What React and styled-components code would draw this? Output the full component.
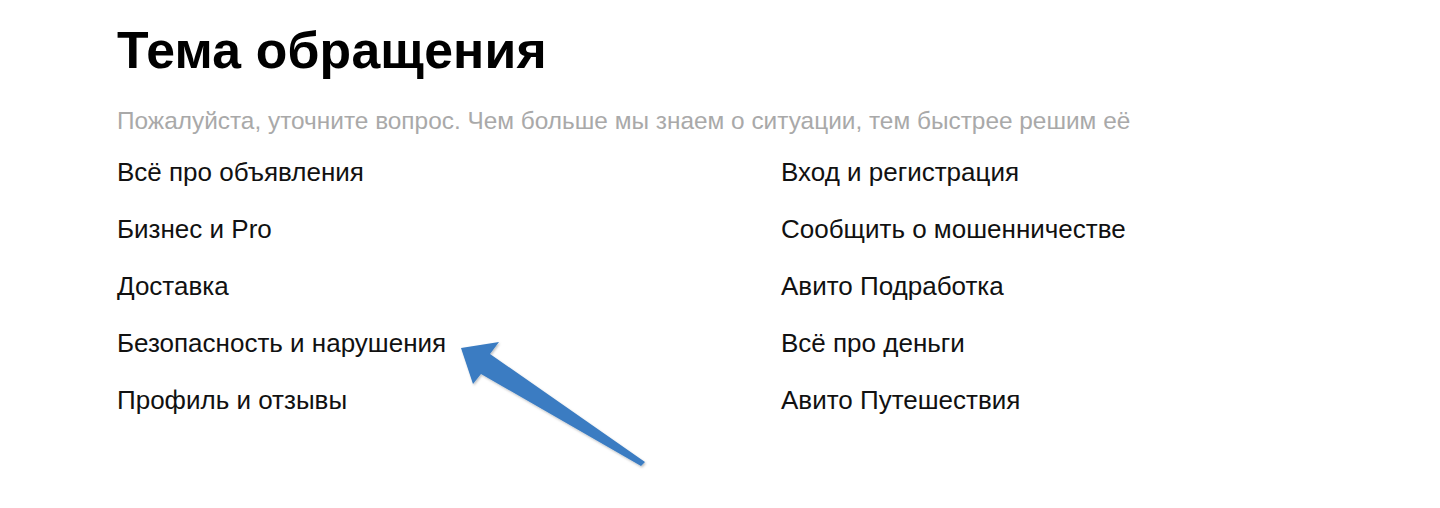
import React from "react";
import styled, { createGlobalStyle } from "styled-components";

const GlobalStyle = createGlobalStyle`
  html, body {
    margin: 0;
    padding: 0;
    background: #ffffff;
  }
  body {
    font-family: "Liberation Sans", Arial, sans-serif;
    color: #000000;
  }
`;

const topicsLeft = [
  "Всё про объявления",
  "Бизнес и Pro",
  "Доставка",
  "Безопасность и нарушения",
  "Профиль и отзывы",
];

const topicsRight = [
  "Вход и регистрация",
  "Сообщить о мошенничестве",
  "Авито Подработка",
  "Всё про деньги",
  "Авито Путешествия",
];

const Arrow = () => (
  <ArrowSvg width="200" height="140" viewBox="0 0 200 140">
    <defs>
      <filter id="arrowShadow" x="-20%" y="-20%" width="140%" height="140%">
        <feDropShadow dx="1" dy="1.5" stdDeviation="1.2" floodColor="#000" floodOpacity="0.25" />
      </filter>
    </defs>
    <path
      d="M2 7 L40 1 L31 13 L186 121 L182 125 L22 33 L14 43 Z"
      fill="#3b7cc2"
      filter="url(#arrowShadow)"
      strokeLinejoin="round"
    />
  </ArrowSvg>
);

const App = () => {
  return (
    <>
      <GlobalStyle />
      <Page>
        <Title>Тема обращения</Title>
        <Hint>
          Пожалуйста, уточните вопрос. Чем больше мы знаем о ситуации, тем
          быстрее решим её
        </Hint>
        <Columns>
          <Column>
            {topicsLeft.map((topic) => (
              <Topic key={topic}>{topic}</Topic>
            ))}
          </Column>
          <Column>
            {topicsRight.map((topic) => (
              <Topic key={topic}>{topic}</Topic>
            ))}
          </Column>
        </Columns>
        <Arrow />
      </Page>
    </>
  );
};

export default App;

const Page = styled.div`
  position: relative;
  width: 1440px;
  height: 508px;
  box-sizing: border-box;
  padding: 20px 0 0 117px;
  overflow: hidden;
`;

const Title = styled.h1`
  margin: 0;
  font-size: 51.7px;
  font-weight: 700;
  line-height: 60px;
  letter-spacing: 0.2px;
`;

const Hint = styled.div`
  margin-top: 28px;
  font-size: 24.4px;
  line-height: 26px;
  color: #a9a9a9;
  white-space: nowrap;
`;

const Columns = styled.div`
  display: grid;
  grid-template-columns: 664px 1fr;
  margin-top: 25px;
`;

const Column = styled.div`
  display: flex;
  flex-direction: column;
  gap: 31px;
`;

const Topic = styled.div`
  font-size: 26px;
  line-height: 26px;
  color: #111111;
  white-space: nowrap;
`;

const ArrowSvg = styled.svg`
  position: absolute;
  left: 459px;
  top: 341px;
  overflow: visible;
`;
